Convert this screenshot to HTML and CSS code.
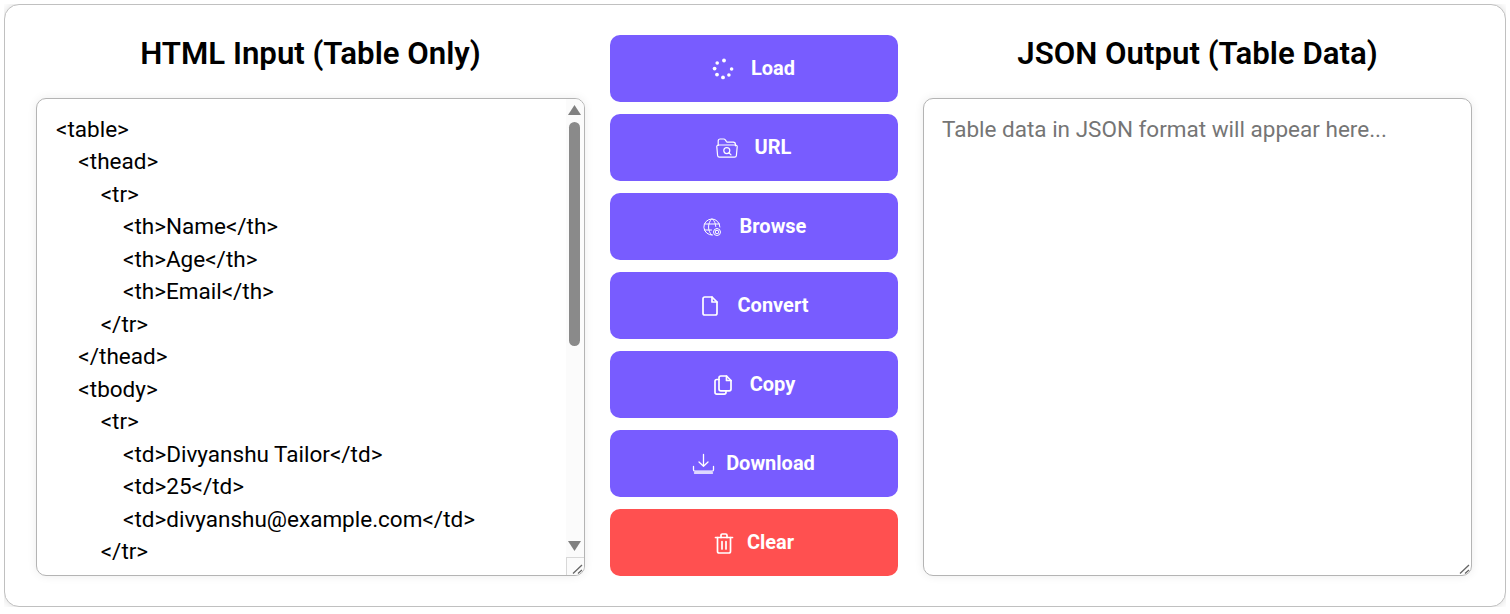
FILE: index.html
```html
<!DOCTYPE html>
<html lang="en">
<head>
    <meta charset="UTF-8">
    <meta name="viewport" content="width=device-width, initial-scale=1.0">
    <title>HTML Table to JSON</title>
    <link rel="stylesheet" href="styles.css">
</head>
<body>
    <div class="converter">
        <div class="panel">
            <h2 class="panel-title">HTML Input (Table Only)</h2>
            <div class="editor-wrap">
                <textarea class="editor editor-input" spellcheck="false">&lt;table&gt;
    &lt;thead&gt;
        &lt;tr&gt;
            &lt;th&gt;Name&lt;/th&gt;
            &lt;th&gt;Age&lt;/th&gt;
            &lt;th&gt;Email&lt;/th&gt;
        &lt;/tr&gt;
    &lt;/thead&gt;
    &lt;tbody&gt;
        &lt;tr&gt;
            &lt;td&gt;Divyanshu Tailor&lt;/td&gt;
            &lt;td&gt;25&lt;/td&gt;
            &lt;td&gt;divyanshu@example.com&lt;/td&gt;
        &lt;/tr&gt;
        &lt;tr&gt;
            &lt;td&gt;Jane Smith&lt;/td&gt;
            &lt;td&gt;30&lt;/td&gt;
            &lt;td&gt;jane@example.com&lt;/td&gt;
        &lt;/tr&gt;
        &lt;tr&gt;
            &lt;td&gt;John Doe&lt;/td&gt;
            &lt;td&gt;28&lt;/td&gt;
            &lt;td&gt;john@example.com&lt;/td&gt;
        &lt;/tr&gt;
    &lt;/tbody&gt;
&lt;/table&gt;</textarea>
                <div class="scrollbar">
                    <div class="scroll-arrow scroll-up"></div>
                    <div class="scroll-thumb"></div>
                    <div class="scroll-arrow scroll-down"></div>
                    <div class="scroll-corner">
                        <svg viewBox="0 0 18 18" width="18" height="18" fill="none" stroke="#666" stroke-width="1.300">
                            <path d="M7 16.500L16 8M12 16.500L16 13"/>
                        </svg>
                    </div>
                </div>
            </div>
        </div>

        <div class="actions">
            <button class="btn" type="button">
                <svg class="btn-icon" viewBox="0 0 24 24" fill="#fff">
                    <circle cx="13" cy="3.500" r="1.900"/>
                    <circle cx="6.200" cy="6" r="1.800"/>
                    <circle cx="3.600" cy="11.600" r="1.900"/>
                    <circle cx="6" cy="17.600" r="1.900"/>
                    <circle cx="12" cy="20.400" r="1.900"/>
                    <circle cx="17.900" cy="18" r="1.800"/>
                    <circle cx="20.600" cy="12" r="1.800"/>
                </svg>
                Load
            </button>
            <button class="btn" type="button">
                <svg class="btn-icon" viewBox="0 0 24 24" fill="none" stroke="#fff" stroke-width="1.200" stroke-linecap="round" stroke-linejoin="round">
                    <path d="M3.200 9.500V5c0-1.200.8-2 2-2h3.500c.7 0 1.200.3 1.600.8l1.200 1.800c.3.4.7.6 1.200.6h5.500c1.300 0 2.200.8 2.200 2.100v1.500"/>
                    <path d="M1.800 10.800c-.1-1 .6-1.800 1.600-1.800h17.200c1 0 1.700.8 1.600 1.800l-.8 8.700c-.1 1-.8 1.700-1.800 1.700H4.400c-1 0-1.700-.7-1.800-1.700z"/>
                    <circle cx="11.800" cy="14.600" r="3"/>
                    <path d="M14 16.800l2 2"/>
                </svg>
                URL
            </button>
            <button class="btn" type="button">
                <svg class="btn-icon" viewBox="0 0 24 24" fill="none" stroke="#fff" stroke-width="1" stroke-linecap="round" stroke-linejoin="round">
                    <path d="M12.500 20A8 8 0 1 1 19.900 12"/>
                    <path d="M4.500 9h15M4.500 15h7"/>
                    <path d="M11.500 4c-4 4.500-4 11.500 0 16M12.500 4c2 2 3 4.500 3.300 7.500"/>
                    <rect x="13.500" y="13.500" width="7" height="7" rx="3.500"/>
                    <rect x="15.500" y="15.500" width="3" height="3" rx=".6"/>
                </svg>
                Browse
            </button>
            <button class="btn" type="button">
                <svg class="btn-icon" viewBox="0 0 24 24" fill="none" stroke="#fff" stroke-width="1.700" stroke-linecap="round" stroke-linejoin="round">
                    <path d="M14 3H6.800C5.800 3 5 3.800 5 4.800v14.400c0 1 .8 1.800 1.800 1.800h10.400c1 0 1.800-.8 1.800-1.800V8z"/>
                    <path d="M14 3v5h5"/>
                </svg>
                Convert
            </button>
            <button class="btn btn-copy" type="button">
                <svg class="btn-icon" viewBox="0 0 24 24" fill="none" stroke="#fff" stroke-width="1.700" stroke-linecap="round" stroke-linejoin="round">
                    <path d="M8 6.500H5.800C4.800 6.500 4 7.300 4 8.300v11c0 1 .8 1.800 1.800 1.800h7.400c1 0 1.800-.8 1.800-1.800v-1.500"/>
                    <path d="M15.500 3H9.800C8.800 3 8 3.800 8 4.800V16c0 1 .8 1.800 1.800 1.800h8.400c1 0 1.800-.8 1.800-1.800V7.500z"/>
                    <path d="M15.500 3v4.500H20"/>
                </svg>
                Copy
            </button>
            <button class="btn btn-tight" type="button">
                <svg class="btn-icon" viewBox="0 0 24 24" fill="none" stroke="#fff" stroke-width="1.300" stroke-linecap="round" stroke-linejoin="round">
                    <path d="M12.500 2.500v11.500M8 10l4.500 4.300L17 10"/>
                    <path d="M2.500 14.500v3.200c0 .9.7 1.500 1.500 1.500h17c.8 0 1.500-.6 1.500-1.500v-3.200"/>
                    <path d="M3.500 21h18"/>
                </svg>
                Download
            </button>
            <button class="btn btn-clear btn-tight" type="button">
                <svg class="btn-icon" viewBox="0 0 24 24" fill="none" stroke="#fff" stroke-width="1.700" stroke-linecap="round" stroke-linejoin="round">
                    <path d="M3.500 6.500h17"/>
                    <path d="M9 6.500V4.300c0-.7.5-1.300 1.300-1.300h3.400c.8 0 1.300.6 1.300 1.300v2.200"/>
                    <path d="M5.500 6.500v13.700c0 1 .7 1.800 1.700 1.800h9.600c1 0 1.700-.8 1.700-1.800V6.500"/>
                    <path d="M10 10.500v7.500M14 10.500v7.500"/>
                </svg>
                Clear
            </button>
        </div>

        <div class="panel">
            <h2 class="panel-title">JSON Output (Table Data)</h2>
            <div class="editor-wrap">
                <textarea class="editor editor-output" placeholder="Table data in JSON format will appear here..." readonly></textarea>
            </div>
        </div>
    </div>
</body>
</html>
```

FILE: styles.css
```css
* {
    box-sizing: border-box;
}

body {
    margin: 4px;
    background: #fff;
    font-family: Roboto, "Liberation Sans", sans-serif;
}

.converter {
    display: grid;
    grid-template-columns: 549px 288px 549px;
    column-gap: 25px;
    padding: 30px 33px 30px 31px;
    background: #fff;
    border: 1px solid #c0c0c0;
    border-radius: 15px;
    box-shadow: 0 0 10px rgba(0, 0, 0, 0.15);
}

.panel {
    display: flex;
    flex-direction: column;
    min-width: 0;
}

.panel-title {
    margin: 0 0 27px;
    height: 36px;
    padding-top: 1px;
    font-size: 31.200px;
    line-height: 36px;
    font-weight: 600;
    color: #000;
    text-align: center;
}

.editor-wrap {
    position: relative;
    flex: 1;
    display: flex;
}

.editor {
    flex: 1;
    display: block;
    width: 100%;
    padding: 14px 19px;
    font-family: Roboto, "Liberation Sans", sans-serif;
    font-size: 22.500px;
    line-height: 32.480px;
    color: #000;
    background: #fff;
    border: 1px solid #b4b4b4;
    border-radius: 10px;
    box-shadow: 0 0 10px rgba(0, 0, 0, 0.08);
    outline: none;
    resize: both;
}

.editor::placeholder {
    color: #757575;
}

.editor::-webkit-resizer {
    background: url("data:image/svg+xml,%3Csvg xmlns='http://www.w3.org/2000/svg' width='15' height='15'%3E%3Cpath d='M4 13.500L13 5M9 13.500L13 10' stroke='%23666' stroke-width='1.300' fill='none'/%3E%3C/svg%3E") no-repeat;
}

.editor-input {
    overflow: hidden;
    resize: none;
}

.editor-output {
    padding-left: 18px;
}

/* headless chrome hides real scrollbars, so this one is drawn over the textarea */
.scrollbar {
    position: absolute;
    top: 1px;
    right: 1px;
    bottom: 1px;
    width: 18px;
    display: flex;
    flex-direction: column;
    background: #fbfbfb;
    border-radius: 0 9px 9px 0;
    overflow: hidden;
    pointer-events: none;
}

.scroll-arrow {
    flex: none;
    width: 13px;
    height: 10px;
    margin-left: 2px;
    background: #808080;
}

.scroll-up {
    margin-top: 6px;
    margin-bottom: 7px;
    clip-path: polygon(50% 0, 100% 100%, 0 100%);
}

.scroll-down {
    margin-top: auto;
    margin-bottom: 6px;
    clip-path: polygon(0 0, 100% 0, 50% 100%);
}

.scroll-thumb {
    flex: none;
    width: 11px;
    height: 224px;
    margin-left: 3px;
    background: #8a8a8a;
    border-radius: 6px;
}

.scroll-corner {
    flex: none;
    height: 18px;
    border-top: 1px solid #d8d8d8;
    border-left: 1px solid #d8d8d8;
}

.scroll-corner svg {
    display: block;
    margin: -1px 0 0 -1px;
}

.actions {
    display: flex;
    flex-direction: column;
    gap: 12px;
}

.btn {
    display: flex;
    align-items: center;
    justify-content: center;
    gap: 16px;
    height: 67px;
    width: 100%;
    padding: 0 2px 2px 0;
    font-family: Roboto, "Liberation Sans", sans-serif;
    font-size: 20px;
    font-weight: 700;
    color: #fff;
    background: #785cff;
    border: none;
    border-radius: 10px;
    cursor: pointer;
}

.btn-icon {
    width: 24px;
    height: 24px;
    flex: none;
    margin-top: 2px;
}

.btn-copy {
    gap: 15px;
}

.btn-tight {
    gap: 11px;
}

.btn-clear {
    background: #ff5050;
}
```
